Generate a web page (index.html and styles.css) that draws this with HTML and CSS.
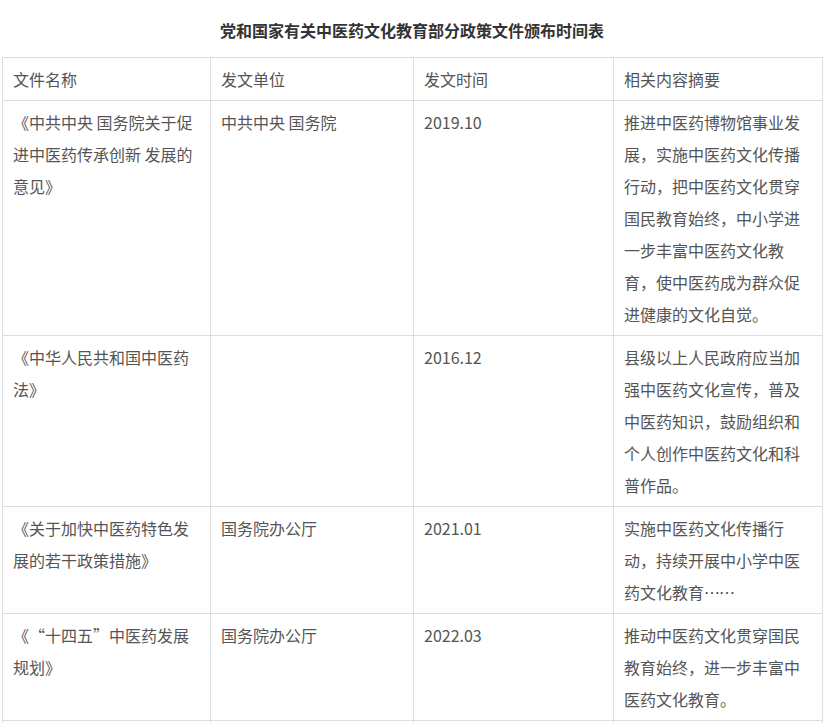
FILE: index.html
```html
<!DOCTYPE html>
<html lang="zh-CN">
<head>
<meta charset="utf-8">
<link rel="stylesheet" href="styles.css">
</head>
<body>
<div class="page">
  <h3 class="title">党和国家有关中医药文化教育部分政策文件颁布时间表</h3>
  <table class="policy">
    <colgroup>
      <col class="c1"><col class="c2"><col class="c3"><col class="c4">
    </colgroup>
    <tbody>
      <tr class="head">
        <td>文件名称</td><td>发文单位</td><td>发文时间</td><td>相关内容摘要</td>
      </tr>
      <tr>
        <td>《中共中央 国务院关于促进中医药传承创新 发展的意见》</td>
        <td>中共中央 国务院</td>
        <td>2019.10</td>
        <td>推进中医药博物馆事业发展，实施中医药文化传播行动，把中医药文化贯穿国民教育始终，中小学进一步丰富中医药文化教育，使中医药成为群众促进健康的文化自觉。</td>
      </tr>
      <tr>
        <td>《中华人民共和国中医药法》</td>
        <td></td>
        <td>2016.12</td>
        <td>县级以上人民政府应当加强中医药文化宣传，普及中医药知识，鼓励组织和个人创作中医药文化和科普作品。</td>
      </tr>
      <tr>
        <td>《关于加快中医药特色发展的若干政策措施》</td>
        <td>国务院办公厅</td>
        <td>2021.01</td>
        <td>实施中医药文化传播行动，持续开展中小学中医药文化教育<span class="ell">……</span></td>
      </tr>
      <tr>
        <td>《<span class="q qo">“</span>十四五<span class="q qc">”</span>中医药发展规划》</td>
        <td>国务院办公厅</td>
        <td>2022.03</td>
        <td>推动中医药文化贯穿国民教育始终，进一步丰富中医药文化教育。</td>
      </tr>
      <tr class="tail">
        <td>&nbsp;</td><td>&nbsp;</td><td>&nbsp;</td><td>&nbsp;</td>
      </tr>
    </tbody>
  </table>
</div>
</body>
</html>
```
FILE: styles.css
```css
html, body {
  margin: 0;
  padding: 0;
  background: #fff;
}
body {
  font-family: "Noto Sans CJK SC", "Microsoft YaHei", sans-serif;
  color: #333;
  font-size: 16px;
}
.page {
  padding: 0 2px;
}
.title {
  margin: 0;
  padding: 14px 0 11px;
  line-height: 32px;
  font-size: 16px;
  font-weight: bold;
  text-align: center;
  color: #333;
}
.policy {
  width: 820px;
  border-collapse: collapse;
  table-layout: fixed;
}
.c1 { width: 208px; }
.c2 { width: 203px; }
.c3 { width: 200px; }
.c4 { width: 209px; }
.policy td {
  border: 1px solid #ddd;
  padding: 5px 10px;
  line-height: 32px;
  vertical-align: top;
  color: #555;
  word-break: break-all;
}
.policy .tail td {
  height: 32px;
}
.q {
  display: inline-block;
  width: 16px;
}
.qo { text-align: right; }
.qc { text-align: left; }
.ell {
  letter-spacing: -1px;
}
```
